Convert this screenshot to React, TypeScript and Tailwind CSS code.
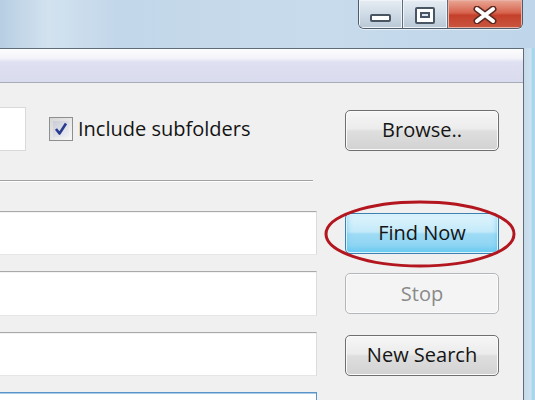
import React from "react";

const baseBtn =
  "w-[154px] h-[41px] rounded-[5px] flex items-center justify-center text-[20px] leading-none font-medium";

const normalBtn =
  "border border-[#6f6f6f] bg-[linear-gradient(#f6f6f6,#ececec_45%,#dedede_52%,#d2d2d2)] shadow-[inset_0_0_0_1px_#fbfbfb] text-[#151515]";

const Button = ({ label, className = "" }: { label: string; className?: string }) => (
  <div className={`${baseBtn} ${normalBtn} ${className}`}>{label}</div>
);

const Field = ({ className = "" }: { className?: string }) => (
  <div
    className={`w-[317px] h-full bg-white border border-l-0 border-t-[#a9a9a9] border-r-[#dcdcdc] border-b-[#e6e6e6] shadow-[inset_0_1px_0_#f3f3f3] ${className}`}
  />
);

const CloseGlyph = () => (
  <svg width="26" height="18" viewBox="0 0 26 18">
    <path d="M5 3 L21 15 M21 3 L5 15" stroke="#5a2a22" strokeWidth="7" strokeLinecap="round" />
    <path d="M5 3 L21 15 M21 3 L5 15" stroke="#ffffff" strokeWidth="4" strokeLinecap="round" />
  </svg>
);

const CheckBox = () => (
  <div className="w-[24px] h-[24px] border border-[#8e8f8f] bg-[linear-gradient(135deg,#d6d6d6,#f7f7f7)] p-[3px]">
    <div className="w-full h-full bg-[linear-gradient(135deg,#c9ccd6,#eef0f4)] flex items-center justify-center">
      <svg width="14" height="14" viewBox="0 0 14 14">
        <path d="M2 7 L5.5 11.5 L12 1.5" fill="none" stroke="#2a3c8f" strokeWidth="2.6" strokeLinejoin="round" />
      </svg>
    </div>
  </div>
);

export default function App() {
  return (
    <div className="w-[535px] h-[400px] overflow-hidden flex flex-col bg-[#c3d8eb] font-['Open_Sans','Noto_Sans',sans-serif]">
      {/* title bar */}
      <div className="h-[48px] shrink-0 flex justify-end items-start pr-[12px] bg-[linear-gradient(90deg,#b7cee3_0%,#d2e2ef_9%,#c3d7ea_22%,#c7dbec_60%,#bfd5e9_100%)]">
        <div className="flex h-[29px] border border-t-0 border-[#4f5c6b] rounded-b-[6px] overflow-hidden shadow-[0_1px_0_#e8f0f7]">
          <div className="w-[44px] h-full flex items-end justify-center pb-[6px] bg-[linear-gradient(#e6edf3,#cfdbe6_50%,#b9c8d6)] border-r border-[#5d6b7a] shadow-[inset_0_0_0_1px_#f0f4f8]">
            <div className="w-[21px] h-[8px] rounded-[2px] bg-white border-2 border-[#4a5563]" />
          </div>
          <div className="w-[45px] h-full flex items-center justify-center pt-[2px] bg-[linear-gradient(#e6edf3,#cfdbe6_50%,#b9c8d6)] border-r border-[#5d6b7a] shadow-[inset_0_0_0_1px_#f0f4f8]">
            <div className="w-[20px] h-[17px] rounded-[2px] bg-white border-2 border-[#4a5563] flex items-center justify-center">
              <div className="w-[10px] h-[6px] border-2 border-[#4a5563] bg-[#dfe5ec]" />
            </div>
          </div>
          <div className="w-[74px] h-full flex items-center justify-center pt-[1px] bg-[linear-gradient(#e9a796,#d7654f_45%,#c4402b_55%,#c9563f)] shadow-[inset_0_0_0_1px_#eab2a5]">
            <CloseGlyph />
          </div>
        </div>
      </div>

      <div className="flex-1 flex">
        {/* client area */}
        <div className="w-[524px] shrink-0 flex flex-col bg-[#f0f0f0] border-t border-r border-[#5f6c7a]">
          <div className="h-[34px] shrink-0 bg-[linear-gradient(#fdfdfe,#f3f3f9_28%,#dfe0f1_40%,#d9dbee)] border-b border-[#a7aab7]" />

          <div className="flex flex-col pr-[24px]">
            {/* path row */}
            <div className="mt-[24px] h-[44px] flex items-center">
              <div className="w-[26px] h-full bg-white border border-l-0 border-[#d9d9d9]" />
              <div className="ml-[23px]">
                <CheckBox />
              </div>
              <span className="ml-[5px] text-[20px] font-medium text-[#141414]">Include subfolders</span>
              <div className="ml-auto mt-[2px]">
                <Button label="Browse.." />
              </div>
            </div>

            {/* separator */}
            <div className="mt-[29px] w-[313px] h-[2px] border-t border-[#a2a2a2] border-b border-b-white" />

            {/* field rows */}
            <div className="mt-[29px] flex flex-col gap-[16px]">
              <div className="h-[44px] flex items-center justify-between">
                <Field />
                <div className="relative">
                  <div
                    className={`${baseBtn} border border-[#3c7fb1] bg-[linear-gradient(#e0f4fc,#c4eafa_45%,#9edbf5_52%,#86d2f3)] shadow-[inset_0_0_0_1px_#d9f2fc,inset_0_-3px_6px_#5fc6f0] text-[#141414]`}
                  >
                    Find Now
                  </div>
                  <svg
                    className="absolute left-[-21px] top-[-13px] pointer-events-none"
                    width="194"
                    height="68"
                    viewBox="0 0 194 68"
                  >
                    <ellipse cx="96" cy="34" rx="94" ry="32" fill="none" stroke="#b3161e" strokeWidth="3" />
                  </svg>
                </div>
              </div>
              <div className="h-[45px] flex items-center justify-between">
                <Field />
                <div
                  className={`${baseBtn} border border-[#b4b8bb] bg-[#f4f4f4] shadow-[inset_0_0_0_1px_#fbfbfb] text-[#8a8a8a]`}
                >
                  Stop
                </div>
              </div>
              <div className="h-[44px] flex items-center justify-between">
                <Field />
                <Button label="New Search" className="mt-[2px]" />
              </div>
              <div className="h-[44px] flex items-start">
                <div className="w-[317px] h-full bg-white border border-l-0 border-[#5b94c8] shadow-[inset_0_1px_0_#a9cbe6]" />
              </div>
            </div>
          </div>
        </div>

        {/* window frame */}
        <div className="flex-1 bg-[linear-gradient(90deg,#c5d9ea,#cfe1ef_60%,#9ed7ef_80%,#b9d4e8)]" />
      </div>
    </div>
  );
}
